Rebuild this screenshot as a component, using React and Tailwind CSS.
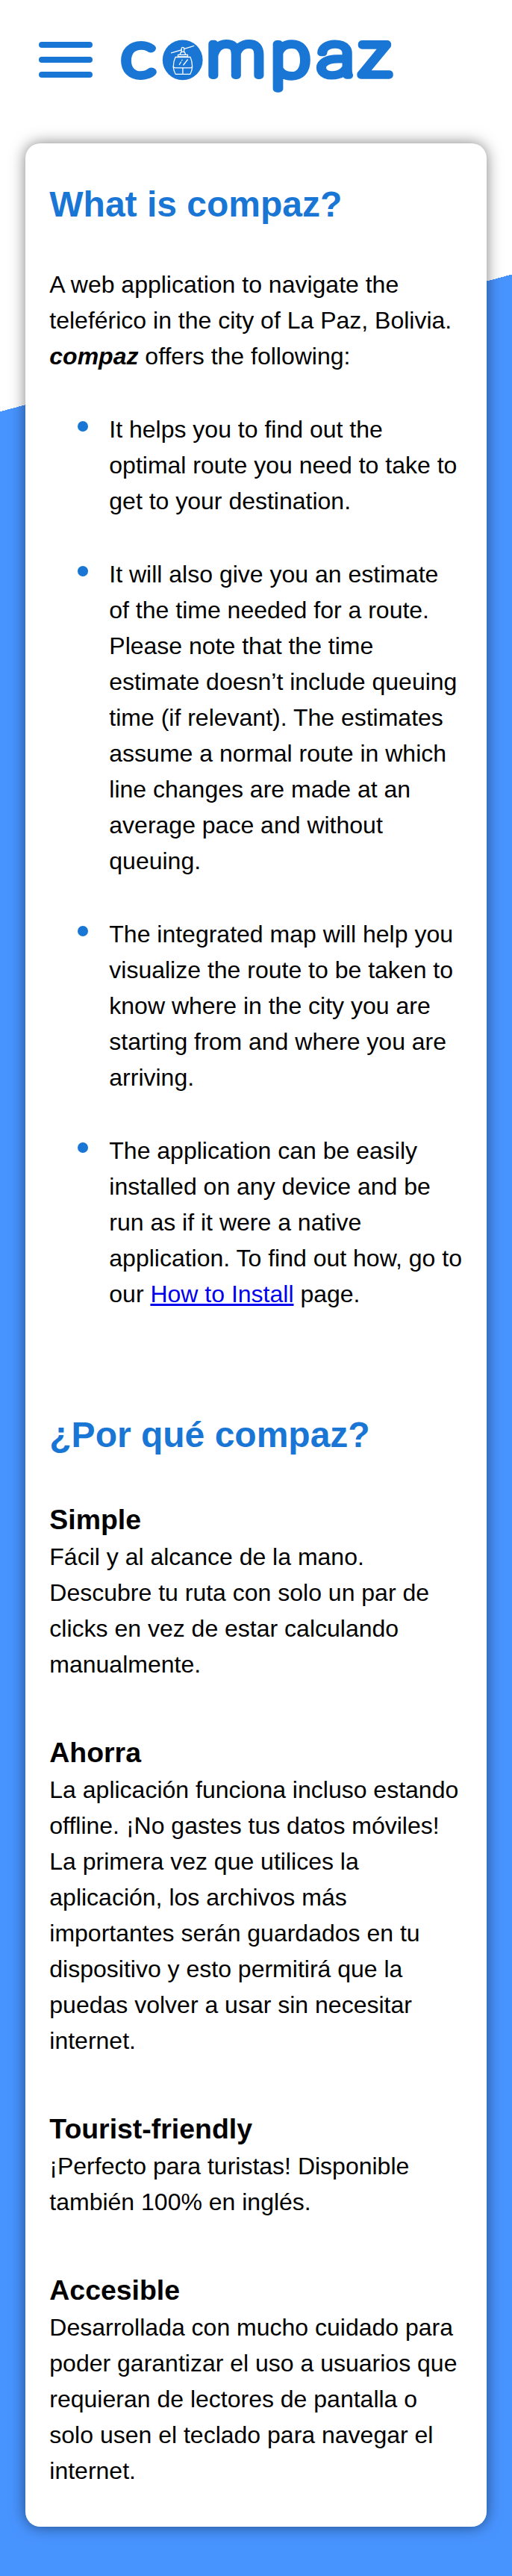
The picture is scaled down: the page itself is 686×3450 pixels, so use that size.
const features = [
  'It helps you to find out the optimal route you need to take to get to your destination.',
  'It will also give you an estimate of the time needed for a route. Please note that the time estimate doesn’t include queuing time (if relevant). The estimates assume a normal route in which line changes are made at an average pace and without queuing.',
  'The integrated map will help you visualize the route to be taken to know where in the city you are starting from and where you are arriving.',
  <>
    The application can be easily installed on any device and be run as if it were a native application. To find out
    how, go to our <a href="#install" className="text-[#0000ee] underline">How to Install</a> page.
  </>,
];

const reasons = [
  ['Simple', 'Fácil y al alcance de la mano. Descubre tu ruta con solo un par de clicks en vez de estar calculando manualmente.'],
  ['Ahorra', 'La aplicación funciona incluso estando offline. ¡No gastes tus datos móviles! La primera vez que utilices la aplicación, los archivos más importantes serán guardados en tu dispositivo y esto permitirá que la puedas volver a usar sin necesitar internet.'],
  ['Tourist-friendly', '¡Perfecto para turistas! Disponible también 100% en inglés.'],
  ['Accesible', 'Desarrollada con mucho cuidado para poder garantizar el uso a usuarios que requieran de lectores de pantalla o solo usen el teclado para navegar el internet.'],
];

// Wordmark letters: thin glyphs thickened by a round-joined stroke.
const letters = [
  { ch: 'c', x: 12.4, y: 90.8, stretch: 1.17, size: 83, stroke: 10.8, font: 'Lato' },
  { ch: 'm', x: 127.9, y: 91.3, stretch: 1.08, size: 79, stroke: 10, font: 'Roboto' },
  { ch: 'p', x: 213.2, y: 92.3, stretch: 1.18, size: 81.5, stroke: 9.5, font: 'Roboto' },
  { ch: 'a', x: 274.9, y: 91.4, stretch: 1.17, size: 80, stroke: 9.2, font: 'Roboto' },
  { ch: 'z', x: 330.1, y: 91.3, stretch: 1.15, size: 79, stroke: 9.5, font: 'Roboto' },
];

function Logo() {
  return (
    <svg width="400" height="150" viewBox="0 0 400 150" role="img" aria-label="compaz">
      <g fill="#1976d5" stroke="#1976d5" strokeLinejoin="round" fontWeight="100">
        {letters.map(({ ch, x, y, stretch, size, stroke, font }) => (
          <text
            key={ch}
            fontSize={size}
            strokeWidth={stroke}
            fontFamily={`${font}, sans-serif`}
            transform={`translate(${x} ${y}) scale(${stretch} 1)`}
          >
            {ch}
          </text>
        ))}
      </g>
      <circle cx="94.7" cy="70.3" r="26.9" fill="#1976d5" />
      <g transform="translate(0 20)" fill="none" stroke="#fff" strokeWidth="1.3" strokeLinecap="round" strokeLinejoin="round">
        <path d="M79.5 40.8 L93 36.8 M97 35.4 L109.7 31.5" />
        <path d="M93.2 39.5 V35 Q93.2 33.4 94.9 33.4 Q96.6 33.4 96.6 35 V39.5" />
        <path d="M91.4 43 Q91.4 39.4 94.9 39.4 Q98.4 39.4 98.4 43" />
        <path d="M88.5 43.3 H101.5 V45.8 H88.5 Z" />
        <path d="M85 46.5 H105 Q108 53 107.5 60.5 Q107.2 65 104.8 69.3 H85.2 Q82.8 65 82.3 60.5 Q82 53 85 46.5 Z" />
        <path d="M82.3 59.2 Q83 60.9 85 60.9 H105 Q107 60.9 107.5 59.2 M94.9 61 V69.3 M101.3 50 L95.8 57 M94 50.3 L93.6 50.8 M92.4 53 L90.3 56.5" />
      </g>
    </svg>
  );
}

export default function App() {
  return (
    <div className="flex h-[3450px] w-[686px] flex-col bg-[linear-gradient(165deg,#fff_532.5px,#4894ff_532.5px)] font-['Liberation_Sans',Arial,sans-serif] text-[32px] leading-[48px] text-black">
      <header className="flex h-[192px] shrink-0 items-start pl-[52px] pt-[10px]">
        <button aria-label="Menu" className="mr-[26px] mt-[46px] flex w-[72px] flex-col gap-[12px]">
          <span className="h-[8px] rounded-[4px] bg-[#1976d5]" />
          <span className="h-[8px] rounded-[4px] bg-[#1976d5]" />
          <span className="h-[8px] rounded-[4px] bg-[#1976d5]" />
        </button>
        <Logo />
      </header>
      <main className="mx-[34px] h-[3192px] rounded-[20px] bg-white pl-[32.3px] pr-[30px] pt-[45px] shadow-[0_0_20px_rgba(0,0,0,0.5)]">
        <h1 className="text-[48px] font-bold leading-[73px] text-[#1976d5]">What is compaz?</h1>
        <p className="mt-[47px]">
          A web application to navigate the teleférico in the city of La Paz, Bolivia. <strong className="italic">compaz</strong> offers the following:
        </p>
        <ul className="mt-[50px] flex flex-col gap-[50px]">
          {features.map((feature, i) => (
            <li key={i} className="flex pl-[37.7px]">
              <span className="mr-[28.3px] mt-[13px] size-[14px] shrink-0 rounded-full bg-[#1976d5]" />
              <p className="w-[474px]">{feature}</p>
            </li>
          ))}
        </ul>
        <h2 className="mb-[51px] mt-[128px] text-[48px] font-bold leading-[73px] text-[#1976d5]">¿Por qué compaz?</h2>
        <div className="flex flex-col gap-[68px]">
          {reasons.map(([title, body]) => (
            <section key={title}>
              <h3 className="text-[37.44px] font-bold leading-[52px]">{title}</h3>
              <p>{body}</p>
            </section>
          ))}
        </div>
      </main>
    </div>
  );
}
